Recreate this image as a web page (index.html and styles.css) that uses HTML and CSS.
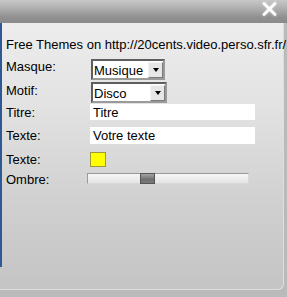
FILE: index.html
```html
<!DOCTYPE html>
<html>
<head>
<meta charset="utf-8">
<link rel="stylesheet" href="styles.css">
</head>
<body>
<div class="window">
  <div class="titlebar">
    <svg class="close" width="15" height="14" viewBox="0 0 15 14">
      <path d="M2 1.5 L13 12.5 M13 1.5 L2 12.5" stroke="#ffffff" stroke-width="2.6" stroke-linecap="round"/>
    </svg>
  </div>
  <div class="panel">
    <div class="title">Free Themes on http://20cents.video.perso.sfr.fr/</div>
    <div class="row row-masque">
      <div class="label">Masque:</div>
      <div class="select sel-masque"><span class="val">Musique</span><span class="arrow"></span></div>
    </div>
    <div class="row row-motif">
      <div class="label">Motif:</div>
      <div class="select sel-motif"><span class="val">Disco</span><span class="arrow"></span></div>
    </div>
    <div class="row row-titre">
      <div class="label">Titre:</div>
      <div class="input input-titre">Titre</div>
    </div>
    <div class="row row-texte">
      <div class="label">Texte:</div>
      <div class="input input-texte">Votre texte</div>
    </div>
    <div class="row row-color">
      <div class="label">Texte:</div>
      <div class="swatch"></div>
    </div>
    <div class="row row-ombre">
      <div class="label">Ombre:</div>
      <div class="slider"><div class="thumb"></div></div>
    </div>
  </div>
</div>
</body>
</html>
```
FILE: styles.css
```css
html, body {
  margin: 0;
  padding: 0;
}
body {
  background: #bababa;
  font-family: "Liberation Sans", Arial, sans-serif;
  font-size: 13px;
  line-height: 15px;
  color: #000;
  overflow: hidden;
}
.window {
  width: 287px;
  height: 297px;
  display: flex;
  flex-direction: column;
}
.titlebar {
  height: 23px;
  flex: none;
  background: linear-gradient(#c8c8c8 0%, #acacac 40%, #909090 75%, #8a8a8a 100%);
  display: flex;
  justify-content: flex-end;
  align-items: flex-start;
  padding-right: 10px;
  box-sizing: border-box;
}
.close {
  margin-top: 2px;
  filter: drop-shadow(0 0 1px rgba(255,255,255,0.6));
}
.panel {
  width: 284px;
  height: 267px;
  box-sizing: border-box;
  padding-left: 6px;
  padding-top: 14px;
  border-right: 1px solid #dedede;
  border-bottom: 1px solid #dedede;
  border-bottom-right-radius: 6px;
  background:
    linear-gradient(#2e5a93, #2e5a93) 0 0 / 2px 244px no-repeat,
    linear-gradient(#ededed 0%, #e3e3e3 30%, #cfcfcf 70%, #c4c4c4 100%);
  display: flex;
  flex-direction: column;
}
.title {
  white-space: nowrap;
  height: 16px;
}
.row {
  display: flex;
  align-items: flex-start;
}
.label {
  width: 84px;
  flex: none;
}
.row-masque { margin-top: 0; height: 27px; }
.row-masque .label { margin-top: 6px; }
.row-masque .select { margin-top: 6px; margin-left: 1px; }
.row-motif { margin-top: 2px; height: 21px; }
.row-motif .label { margin-top: 1px; }
.row-motif .select { margin-left: 1px; }
.row-titre { margin-top: 1px; height: 16px; }
.row-titre .label { margin-top: 1px; }
.row-texte { margin-top: 7px; height: 17px; }
.row-texte .label { margin-top: 1px; }
.row-color { margin-top: 7px; height: 16px; }
.row-color .label { margin-top: 1px; }
.row-color .swatch { margin-top: 1px; }
.row-ombre { margin-top: 5px; height: 12px; }
.row-ombre .slider { margin-top: 1px; margin-left: -3px; }

.select {
  height: 21px;
  box-sizing: border-box;
  border: 2px solid;
  border-color: #5e5e5e #9a9a9a #9a9a9a #5e5e5e;
  background: #ffffff;
  display: flex;
  align-items: flex-start;
  justify-content: space-between;
  padding-left: 1px;
}
.sel-masque { width: 74px; }
.sel-motif { width: 76px; }
.val {
  padding-top: 2px;
}
.arrow {
  width: 15px;
  height: 16px;
  margin-top: 1px;
  box-sizing: border-box;
  border: 1px solid;
  border-color: #f4f4f4 #7a7a7a #7a7a7a #f4f4f4;
  background: #e6e6e6;
  display: flex;
  justify-content: center;
  align-items: center;
}
.arrow::after {
  content: "";
  width: 0;
  height: 0;
  border-left: 3.5px solid transparent;
  border-right: 3.5px solid transparent;
  border-top: 4px solid #000;
}
.input {
  width: 165px;
  box-sizing: border-box;
  background: #ffffff;
  padding-left: 3px;
  padding-top: 1px;
  white-space: nowrap;
}
.input-titre { height: 16px; }
.input-texte { height: 17px; }
.swatch {
  width: 16px;
  height: 15px;
  box-sizing: border-box;
  background: #ffff00;
  border: 1px solid #9c9a3a;
}
.slider {
  width: 162px;
  height: 11px;
  box-sizing: border-box;
  border: 1px solid;
  border-color: #9a9a9a #d8d8d8 #d8d8d8 #9a9a9a;
  background: linear-gradient(#f6f6f6, #e4e4e4);
  display: flex;
  padding-left: 52px;
}
.thumb {
  width: 15px;
  height: 11px;
  margin-top: -1px;
  box-sizing: border-box;
  border: 1px solid #555;
  background: linear-gradient(#a4a4a4, #6e6e6e 60%, #7a7a7a);
}
```
